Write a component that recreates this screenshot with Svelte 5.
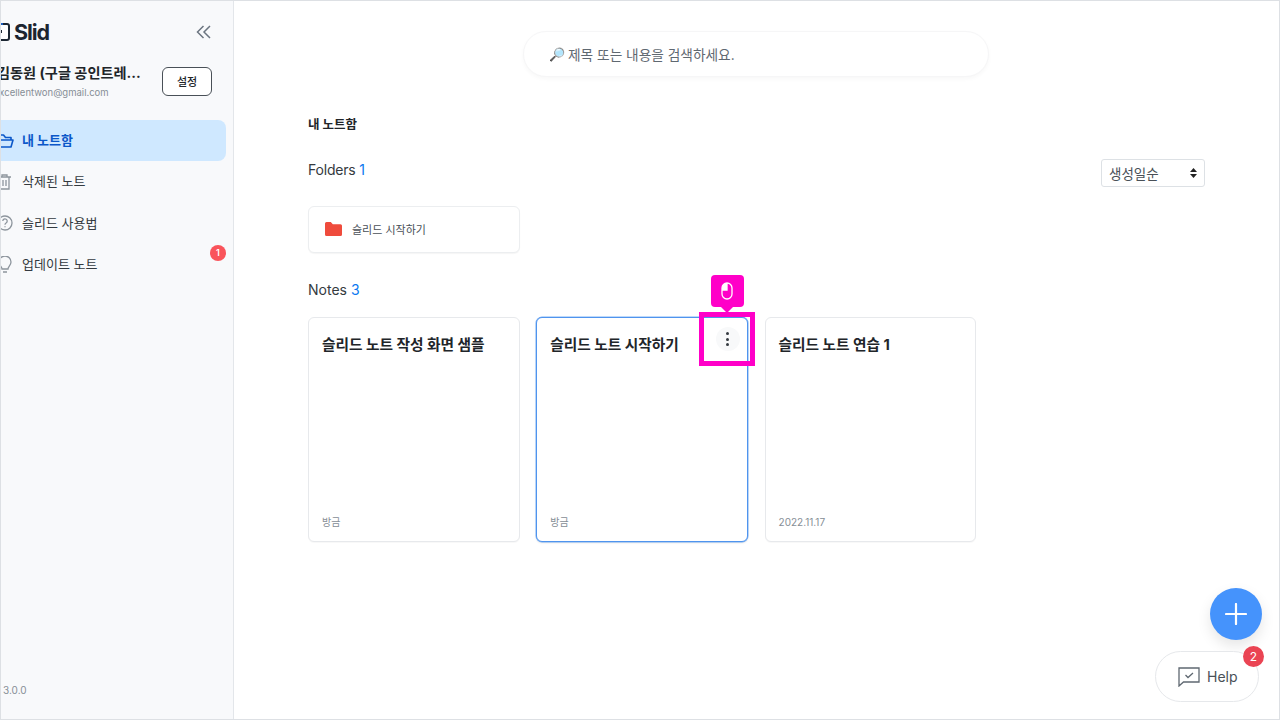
<script>
  const nav = [
    { label: '내 노트함', icon: 'folder', active: true },
    { label: '삭제된 노트', icon: 'trash' },
    { label: '슬리드 사용법', icon: 'help' },
    { label: '업데이트 노트', icon: 'bulb', badge: 1 }
  ];
  const notes = [
    { title: '슬리드 노트 작성 화면 샘플', date: '방금' },
    { title: '슬리드 노트 시작하기', date: '방금', active: true },
    { title: '슬리드 노트 연습 1', date: '2022.11.17' }
  ];
</script>

<div class="frame">
  <aside class="sidebar">
    <div class="inner">
      <div class="brand">
        <div class="logo">
          <svg width="22" height="18" viewBox="0 0 22 18" fill="none">
            <rect x="1" y="1" width="16" height="16" rx="2" fill="#fff" stroke="#1c2733" stroke-width="2"/>
            <rect x="6" y="0" width="5" height="2" fill="#1e5fbf"/>
            <rect x="7" y="7" width="3" height="3" fill="#1c2733"/>
          </svg>
          <span class="word">Slid</span>
        </div>
        <svg class="collapse" width="16" height="14" viewBox="0 0 16 14" fill="none" stroke="#6b7580" stroke-width="1.5">
          <path d="M7.500 1 1.500 7l6 6M14 1 8 7l6 6"/>
        </svg>
      </div>
      <div class="user">
        <div class="who">
          <div class="name">김동원 (구글 공인트레...</div>
          <div class="mail">excellentwon@gmail.com</div>
        </div>
        <button class="settings">설정</button>
      </div>
      <nav class="nav">
        {#each nav as item}
          <div class="nav-item" class:active={item.active}>
            <span class="nav-icon">
              {#if item.icon === 'folder'}
                <svg width="20" height="18" viewBox="0 0 20 18" fill="none" stroke="#0b57c9" stroke-width="1.600" stroke-linejoin="round"><path d="M2 15V3h6.500l2 2.500H16V8M2 8h16l-2 7H2"/></svg>
              {:else if item.icon === 'trash'}
                <svg width="20" height="18" viewBox="0 0 20 18" fill="none" stroke="#8d959d" stroke-width="1.300"><path d="M3 4h13M7 4V2h5v2M5 4v12h9V4M8 7v6M11 7v6"/></svg>
              {:else if item.icon === 'help'}
                <svg width="20" height="18" viewBox="0 0 20 18" fill="none" stroke="#8d959d" stroke-width="1.300"><circle cx="10" cy="9" r="7"/><path d="M7.800 7a2.200 2.200 0 1 1 3.300 2c-.8.500-1.100 1-1.100 1.800M10 12.300v1"/></svg>
              {:else}
                <svg width="20" height="18" viewBox="0 0 20 18" fill="none" stroke="#8d959d" stroke-width="1.300"><path d="M7 13c0-2.500-3-3.500-3-7a6 6 0 0 1 12 0c0 3.500-3 4.500-3 7zM8 16h4"/></svg>
              {/if}
            </span>
            <span class="nav-label">{item.label}</span>
            {#if item.badge}<span class="nav-badge">{item.badge}</span>{/if}
          </div>
        {/each}
      </nav>
      <div class="version">3.0.0</div>
    </div>
  </aside>

  <main class="main">
    <div class="search">
      <span class="lens">🔎</span>
      <span>제목 또는 내용을 검색하세요.</span>
    </div>
    <div class="content">
      <h1 class="page-title">내 노트함</h1>
      <div class="folders-head">
        <div class="section first">Folders <b>1</b></div>
        <div class="select">
          <span>생성일순</span>
          <svg width="7" height="10" viewBox="0 0 7 10" fill="#222"><path d="M3.500 0 7 4H0zM3.500 10 0 6h7z"/></svg>
        </div>
      </div>
      <div class="folder">
        <svg width="17" height="14" viewBox="0 0 17 14"><path d="M0 1.500A1.500 1.500 0 0 1 1.500 0h4.300l2 2.300h7.700A1.500 1.500 0 0 1 17 3.800v8.700a1.500 1.500 0 0 1-1.500 1.500h-14A1.500 1.500 0 0 1 0 12.500z" fill="#ef4b3c"/></svg>
        <span>슬리드 시작하기</span>
      </div>
      <div class="section notes-head">Notes <b>3</b></div>
      <div class="notes">
        {#each notes as note}
          <article class="note" class:active={note.active}>
            <div class="note-title">{note.title}</div>
            <div class="note-date">{note.date}</div>
            {#if note.active}
              <div class="more"><i></i><i></i><i></i></div>
              <div class="highlight"></div>
              <div class="tip">
                <svg width="12" height="18" viewBox="0 0 12 18" fill="none" stroke="#fff" stroke-width="1.300">
                  <path d="M6 1a5 5 0 0 0-5 5v2h5z" fill="#fff" stroke="none"/>
                  <rect x="1" y="1" width="10" height="16" rx="5"/>
                  <path d="M6 1v7H1"/>
                </svg>
              </div>
            {/if}
          </article>
        {/each}
      </div>
    </div>
    <button class="fab" aria-label="새 노트">
      <svg width="22" height="22" viewBox="0 0 22 22" stroke="#fff" stroke-width="2.200" stroke-linecap="round"><path d="M11 1v20M1 11h20"/></svg>
    </button>
    <div class="help">
      <svg width="22" height="20" viewBox="0 0 22 20" fill="none" stroke="#5f6871" stroke-width="1.300"><path d="M1 1h20v14H5.500L1 19z"/><path d="m7.500 8 2.500 2.500L15 6"/></svg>
      <span>Help</span>
      <span class="help-badge">2</span>
    </div>
  </main>
</div>

<style>
  :global(body) {
    margin: 0;
    background: #fff;
    font-family: Inter, "Noto Sans CJK KR", sans-serif;
  }
  .frame {
    box-sizing: border-box;
    width: 1280px;
    height: 720px;
    display: flex;
    border: 1px solid #dde0e4;
    overflow: hidden;
    color: #212529;
  }
  .sidebar {
    width: 233px;
    flex: none;
    box-sizing: border-box;
    background: #f8f9fb;
    border-right: 1px solid #e3e6ea;
    overflow: hidden;
  }
  .inner {
    margin-left: -12px;
    width: 243px;
    height: 100%;
    display: flex;
    flex-direction: column;
    box-sizing: border-box;
    position: relative;
  }
  .brand {
    display: flex;
    align-items: center;
    justify-content: space-between;
    padding: 21px 20px 0 3px;
    height: 20px;
  }
  .logo { display: flex; align-items: center; gap: 0; }
  .word {
    font-size: 21.500px;
    font-weight: 700;
    letter-spacing: -1.100px;
    color: #1c2530;
    line-height: 20px;
  }
  .user {
    display: flex;
    justify-content: space-between;
    align-items: center;
    margin-top: 21px;
    padding: 0 20px 0 8px;
  }
  .name {
    font-size: 14.200px;
    font-weight: 700;
    line-height: 20px;
    color: #212529;
    white-space: nowrap;
  }
  .mail {
    font-size: 9.500px;
    line-height: 14px;
    color: #868e96;
    margin: 3px 0 -1px -3px;
  }
  .settings {
    box-sizing: border-box;
    width: 50px;
    height: 29px;
    padding: 0;
    background: #fff;
    border: 1px solid #495057;
    border-radius: 6px;
    font: 500 11px Inter, "Noto Sans CJK KR", sans-serif;
    color: #212529;
  }
  .nav { margin-top: 21px; display: flex; flex-direction: column; padding-right: 6px; }
  .nav-item {
    position: relative;
    display: flex;
    align-items: center;
    height: 41.300px;
    font-size: 13px;
    color: #343a40;
    border-radius: 8px;
  }
  .nav-item.active {
    background: #cfe8ff;
    color: #0b57c9;
    font-weight: 700;
  }
  .nav-icon { width: 27px; margin-left: 6px; flex: none; display: flex; }
  .nav-label { margin-bottom: 2px; }
  .nav-badge {
    position: absolute;
    right: 0;
    top: 1px;
    width: 16px;
    height: 16px;
    border-radius: 50%;
    background: #f9545b;
    color: #fff;
    font-size: 9px;
    font-weight: 600;
    display: flex;
    align-items: center;
    justify-content: center;
  }
  .version {
    margin-top: auto;
    margin-bottom: 23px;
    padding-left: 14px;
    font-size: 10px;
    line-height: 12px;
    color: #868e96;
  }
  .main {
    flex: 1;
    position: relative;
    min-width: 0;
  }
  .search {
    box-sizing: border-box;
    width: 466px;
    height: 46px;
    margin: 30px 0 0 289px;
    padding-left: 25px;
    display: flex;
    align-items: center;
    gap: 3px;
    border-radius: 23px;
    background: #fff;
    border: 1px solid #f6f6f7;
    box-shadow: 0 2px 4px rgba(0, 0, 0, 0.03);
    font-size: 13.700px;
    color: #5f6871;
  }
  .lens { font-size: 13px; line-height: 1; }
  .content { padding: 0 74px; }
  .page-title {
    margin: 39px 0 0;
    font-size: 12.500px;
    line-height: 18px;
    font-weight: 700;
    color: #212529;
  }
  .folders-head {
    margin-top: 25px;
    display: flex;
    justify-content: space-between;
    align-items: flex-start;
    height: 47px;
  }
  .section {
    font-size: 14px;
    line-height: 20px;
    color: #343a40;
  }
  .section.first { margin-top: 1px; letter-spacing: -0.200px; }
  .section b { font-weight: 400; color: #0b78f0; }
  .select {
    box-sizing: border-box;
    width: 104px;
    height: 28px;
    display: flex;
    align-items: center;
    justify-content: space-between;
    padding: 0 7px;
    background: #fff;
    border: 1px solid #dde1e5;
    border-radius: 3px;
    font-size: 13.500px;
    color: #495057;
  }
  .folder {
    box-sizing: border-box;
    width: 212px;
    height: 47px;
    display: flex;
    align-items: center;
    gap: 10px;
    padding: 0 0 1px 16px;
    background: #fff;
    border: 1px solid #eceef0;
    border-radius: 6px;
    box-shadow: 0 1px 1px rgba(0, 0, 0, 0.04);
    font-size: 11px;
    color: #495057;
  }
  .folder span { margin-bottom: 1px; }
  .notes-head { margin-top: 27px; }
  .notes { margin-top: 17px; display: flex; gap: 16.600px; }
  .note {
    box-sizing: border-box;
    position: relative;
    width: 211.700px;
    height: 225px;
    padding: 17px 13px 13px;
    background: #fff;
    border: 1px solid #e7e9ec;
    border-radius: 6px;
    box-shadow: 0 1px 1px rgba(0, 0, 0, 0.03);
    display: flex;
    flex-direction: column;
    justify-content: space-between;
  }
  .note.active {
    border-color: #4f94ee;
    box-shadow: 0 0 0 0.500px #7fb3f5, 0 1px 2px rgba(0, 0, 0, 0.12);
  }
  .note-title {
    font-size: 14.700px;
    line-height: 20px;
    font-weight: 700;
    color: #212529;
  }
  .note-date { font-size: 10px; line-height: 12px; color: #868e96; }
  .more {
    position: absolute;
    top: 9px;
    right: 7px;
    width: 24px;
    height: 24px;
    border-radius: 50%;
    background: #f8f9fa;
    display: flex;
    flex-direction: column;
    align-items: center;
    justify-content: center;
    gap: 2.500px;
  }
  .more i { width: 3px; height: 3px; border-radius: 50%; background: #343a40; }
  .highlight {
    box-sizing: border-box;
    position: absolute;
    top: -6px;
    right: -8px;
    width: 55.500px;
    height: 54px;
    border: 5px solid #ff00c8;
  }
  .tip {
    position: absolute;
    top: -43px;
    right: 3px;
    width: 33px;
    height: 32px;
    border-radius: 4px;
    background: #ff00c8;
    display: flex;
    align-items: center;
    justify-content: center;
  }
  .tip::after {
    content: "";
    position: absolute;
    left: 10px;
    bottom: -6px;
    border-left: 6px solid transparent;
    border-right: 6px solid transparent;
    border-top: 6px solid #ff00c8;
  }
  .fab {
    position: absolute;
    right: 17px;
    bottom: 79px;
    width: 52px;
    height: 52px;
    padding: 0;
    border: 0;
    border-radius: 50%;
    background: #4593fc;
    box-shadow: 0 6px 14px rgba(0, 0, 0, 0.1);
    display: flex;
    align-items: center;
    justify-content: center;
  }
  .help {
    box-sizing: border-box;
    position: absolute;
    right: 20px;
    bottom: 17px;
    width: 104px;
    height: 51px;
    background: #fff;
    border: 1px solid #e6e8eb;
    border-radius: 26px;
    display: flex;
    align-items: center;
    gap: 7px;
    padding-left: 22px;
    font-size: 14px;
    color: #495057;
  }
  .help-badge {
    position: absolute;
    top: -6px;
    right: -6px;
    width: 21px;
    height: 21px;
    border-radius: 50%;
    background: #ea4453;
    color: #fff;
    font-size: 12px;
    display: flex;
    align-items: center;
    justify-content: center;
  }
</style>
